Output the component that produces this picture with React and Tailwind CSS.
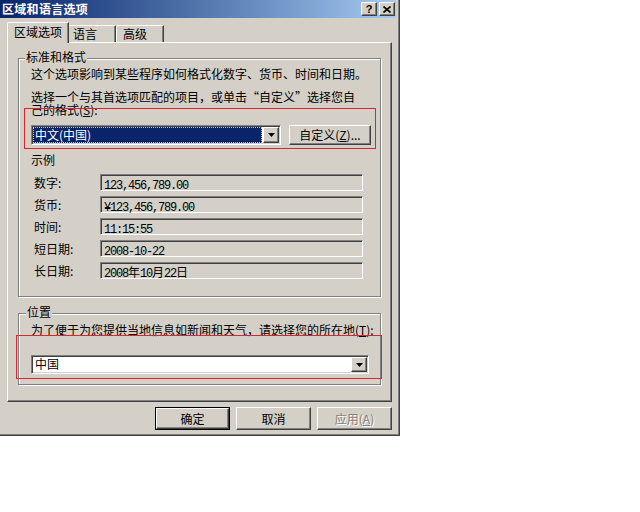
import React from 'react';

// classic 3D edges
const raised = "border border-t-white border-l-white border-r-[#404040] border-b-[#404040] shadow-[inset_-1px_-1px_#808080]";
const sunken = "border border-t-[#808080] border-l-[#808080] border-r-white border-b-white shadow-[inset_1px_1px_#404040,inset_-1px_-1px_#d4d0c8]";
const etched = "border border-[#808080] shadow-[inset_1px_1px_#fff,1px_1px_#fff]";
const mono = "font-['Liberation_Mono',monospace] text-[12px] tracking-[-1.2px]";

function ArrowBtn() {
  return (
    <div className={`w-[16px] my-[1px] mr-[1px] flex items-center justify-center bg-[#d4d0c8] ${raised}`}>
      <svg width="7" height="4" viewBox="0 0 7 4">
        <path d="M0 0h7L3.5 4z" fill="#000" />
      </svg>
    </div>
  );
}

function Field({ label, children }) {
  return (
    <div className="flex items-center h-[17px] mb-[5px]">
      <div className="w-[66px] text-[12px] leading-[13px]">{label}</div>
      <div className={`w-[263px] h-[17px] bg-[#d4d0c8] pl-[3px] pt-[2px] ${sunken}`}>
        <div className="leading-[13px] whitespace-nowrap">{children}</div>
      </div>
    </div>
  );
}

function Button({ children, isDefault, disabled }) {
  const inner = (
    <div className={`w-full h-full flex items-center justify-center text-[12px] ${raised} ${disabled ? "text-[#808080] [text-shadow:1px_1px_0_#fff]" : ""}`}>
      {children}
    </div>
  );
  return (
    <div className={`w-[75px] h-[23px] ${isDefault ? "border border-black" : ""}`}>{inner}</div>
  );
}

export default function App() {
  return (
    <div className="w-[640px] h-[512px] bg-white text-black font-['Noto_Sans_CJK_SC','Liberation_Sans',sans-serif]">
      <div className="w-[400px] h-[436px] bg-[#d4d0c8] flex flex-col border-r border-b border-[#404040] shadow-[inset_-1px_-1px_#808080] pr-[3px] pb-[3px]">
        {/* Title bar */}
        <div className="h-[18px] w-[396px] flex items-center bg-linear-to-r from-[#0a246a] to-[#a6caf0] pl-[2px] pr-[1px]">
          <span className="text-white font-bold text-[12px] leading-[14px] tracking-[0.3px] flex-1">区域和语言选项</span>
          <div className={`w-[16px] h-[14px] bg-[#d4d0c8] flex items-center justify-center ${raised}`}>
            <span className="font-['Liberation_Sans',sans-serif] font-bold text-[11px] leading-none">?</span>
          </div>
          <div className={`w-[16px] h-[14px] ml-[2px] bg-[#d4d0c8] flex items-center justify-center ${raised}`}>
            <svg width="8" height="7" viewBox="0 0 8 7">
              <path d="M0.5 0.5L7.5 6.5M7.5 0.5L0.5 6.5" stroke="#000" strokeWidth="1.6" />
            </svg>
          </div>
        </div>

        {/* Tabs */}
        <div className="mt-[4px] ml-[7px] h-[20px] flex items-end text-[12px]">
          <div className="relative z-10 -mb-[1px] w-[62px] h-[21px] bg-[#d4d0c8] border-l border-t border-r border-l-white border-t-white border-r-[#404040] shadow-[inset_-1px_0_#808080] rounded-tl-[2px] text-center leading-[14px] pt-[2px]">
            区域选项
          </div>
          <div className="w-[47px] h-[17px] border-t border-r border-t-white border-r-[#404040] shadow-[inset_-1px_0_#808080] pl-[4px] leading-[14px] pt-[1px]">
            语言
          </div>
          <div className="w-[48px] h-[17px] border-l border-t border-r border-l-white border-t-white border-r-[#404040] shadow-[inset_-1px_0_#808080] rounded-tl-[2px] pl-[6px] leading-[14px] pt-[1px]">
            高级
          </div>
        </div>

        {/* Tab panel */}
        <div className="ml-[7px] w-[385px] h-[360px] border border-t-white border-l-white border-r-[#404040] border-b-[#404040] shadow-[inset_-1px_-1px_#808080] text-[12px]">
          {/* 标准和格式 */}
          <div className={`relative ml-[10px] mt-[15px] w-[363px] h-[239px] ${etched}`}>
            <div className="-mt-[8px] ml-[6px] w-fit bg-[#d4d0c8] px-[1px] leading-[12px]">标准和格式</div>
            <div className="mt-[4px] pl-[12px] leading-[13px] whitespace-nowrap">这个选项影响到某些程序如何格式化数字、货币、时间和日期。</div>
            <div className="mt-[10px] pl-[12px] h-[13px] leading-[13px] whitespace-nowrap">选择一个与其首选项匹配的项目，或单击“自定义”选择您自</div>
            <div className="pl-[12px] h-[13px] leading-[13px] whitespace-nowrap">
              己的格式(<span className="underline">S</span>):
            </div>
            <div className="mt-[9px] pl-[12px] flex">
              <div className={`w-[250px] h-[20px] flex bg-white ${sunken}`}>
                <div className="flex-1 m-[1px] bg-[#0a246a] outline-1 outline-dotted outline-[#d8c890] -outline-offset-1 text-white leading-[14px] pl-[2px] pt-[1px]">
                  中文(中国)
                </div>
                <ArrowBtn />
              </div>
              <div className="ml-[8px] w-[82px] h-[20px]">
                <div className={`w-full h-full flex items-center justify-center ${raised}`}>
                  自定义(<span className="underline">Z</span>)...
                </div>
              </div>
            </div>
            <div className="mt-[8px] pl-[12px] leading-[13px]">示例</div>
            <div className="mt-[8px] pl-[15px]">
              <Field label="数字:">
                <span className={mono}>123,456,789.00</span>
              </Field>
              <Field label="货币:">
                <span className={mono}>¥123,456,789.00</span>
              </Field>
              <Field label="时间:">
                <span className={mono}>11:15:55</span>
              </Field>
              <Field label="短日期:">
                <span className={mono}>2008-10-22</span>
              </Field>
              <Field label="长日期:">
                <span className={mono}>2008</span>
                <span className="text-[12px]">年</span>
                <span className={mono}>10</span>
                <span className="text-[12px]">月</span>
                <span className={mono}>22</span>
                <span className="text-[12px]">日</span>
              </Field>
            </div>
            <div className="absolute left-[5px] top-[49px] w-[352px] h-[41px] border border-[#d9262f] pointer-events-none" />
          </div>

          {/* 位置 */}
          <div className={`relative ml-[10px] mt-[16px] w-[363px] h-[72px] ${etched}`}>
            <div className="-mt-[8px] ml-[7px] w-fit bg-[#d4d0c8] px-[1px] leading-[12px]">位置</div>
            <div className="mt-[5px] pl-[12px] leading-[13px] whitespace-nowrap">
              为了便于为您提供当地信息如新闻和天气，请选择您的所在地(<span className="underline">T</span>):
            </div>
            <div className="mt-[19px] pl-[12px]">
              <div className={`w-[338px] h-[19px] flex bg-white ${sunken}`}>
                <div className="flex-1 pl-[3px] leading-[14px] pt-[1px]">中国</div>
                <ArrowBtn />
              </div>
            </div>
            <div className="absolute -left-[3px] top-[21px] w-[366px] h-[44px] border border-[#d9262f] pointer-events-none" />
          </div>
        </div>

        {/* Buttons */}
        <div className="mt-[5px] ml-[155px] flex gap-[6px]">
          <Button isDefault>确定</Button>
          <Button>取消</Button>
          <Button disabled>
            应用(<span className="underline">A</span>)
          </Button>
        </div>
      </div>
    </div>
  );
}
